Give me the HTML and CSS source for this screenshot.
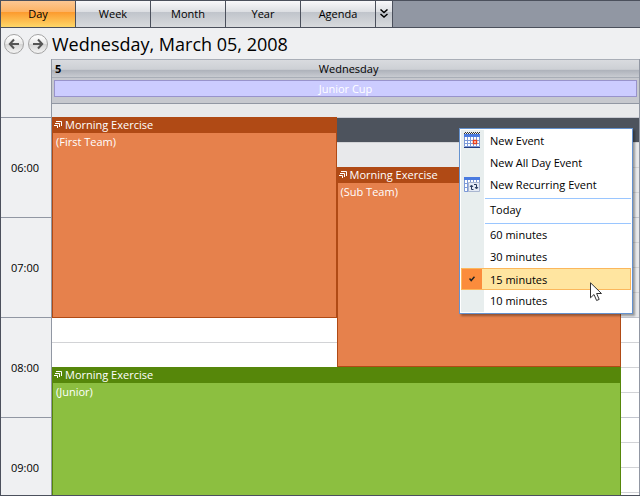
FILE: index.html
```html
<!DOCTYPE html>
<html lang="en">
<head>
  <meta charset="UTF-8" />
  <title>Calendar - Day View</title>
  <link rel="stylesheet" href="styles.css">
</head>
<body>
  <div class="calendar">
    <nav class="tabs">
      <button class="tab active">Day</button>
      <button class="tab">Week</button>
      <button class="tab">Month</button>
      <button class="tab">Year</button>
      <button class="tab">Agenda</button>
      <button class="tab more" aria-label="More views">
        <svg width="8" height="9" viewBox="0 0 8 9" fill="none" stroke="#000" stroke-width="1.5"><path d="M.5.5 4 3.5 7.5.5M.5 5 4 8 7.5 5" /></svg>
      </button>
    </nav>

    <header class="date-bar">
      <button class="nav-btn" aria-label="Previous day">
        <svg width="12" height="12" viewBox="0 0 12 12" fill="none" stroke="#555" stroke-width="2"><path d="M6 1.5 1.8 6 6 10.5M2 6h9" /></svg>
      </button>
      <button class="nav-btn" aria-label="Next day">
        <svg width="12" height="12" viewBox="0 0 12 12" fill="none" stroke="#555" stroke-width="2"><path d="M6 1.5 10.2 6 6 10.5M10 6H1" /></svg>
      </button>
      <h1>Wednesday, March 05, 2008</h1>
    </header>

    <div class="schedule">
      <div class="times">
        <div class="corner"></div>
        <div class="hour">06:00</div>
        <div class="hour">07:00</div>
        <div class="hour">08:00</div>
        <div class="hour">09:00</div>
      </div>

      <div class="day">
        <div class="day-head"><b>5</b><span>Wednesday</span></div>
        <div class="all-day"><div class="all-day-event">Junior Cup</div></div>
        <div class="before"></div>
        <div class="lane">
          <div class="slots">
            <div class="slot selected"></div>
            <div class="slot off"></div>
            <div class="slot off"></div>
            <div class="slot off hour-end"></div>
            <div class="slot off"></div>
            <div class="slot off"></div>
            <div class="slot off"></div>
            <div class="slot off hour-end"></div>
            <div class="slot"></div>
            <div class="slot"></div>
            <div class="slot"></div>
            <div class="slot hour-end"></div>
            <div class="slot"></div>
            <div class="slot"></div>
            <div class="slot"></div>
            <div class="slot hour-end"></div>
          </div>
          <div class="events">
            <article class="event first">
              <h2><svg width="8" height="8"><path d="M2 1.5h5.500V6M1 3.500h4.500V7M0 5.500h3.500V8" /></svg>Morning Exercise</h2>
              <p>(First Team)</p>
            </article>
            <article class="event sub">
              <h2><svg width="8" height="8"><path d="M2 1.5h5.500V6M1 3.500h4.500V7M0 5.500h3.500V8" /></svg>Morning Exercise</h2>
              <p>(Sub Team)</p>
            </article>
            <article class="event junior">
              <h2><svg width="8" height="8"><path d="M2 1.5h5.500V6M1 3.500h4.500V7M0 5.500h3.500V8" /></svg>Morning Exercise</h2>
              <p>(Junior)</p>
            </article>
          </div>
        </div>
      </div>
    </div>

    <div class="menu" role="menu">
      <button role="menuitem">
        <span class="icon">
          <svg width="16" height="16" viewBox="0 0 16 16">
            <path fill="#fff" d="M0 2h16v13H0z" />
            <path fill="#4a7be0" d="M0 2h16v3H0z" />
            <path stroke="#333" stroke-dasharray="1 1" d="M1 .5h15M0 1.5h16" />
            <path stroke="#7d9ad8" fill="none" d="M.5 5v9.5h15V5M3.5 5v9M6.5 5v9M9.5 5v9M12.5 5v9M1 8.5h14M1 11.5h14" />
            <path stroke="#223c80" d="M0 15.5h16" />
            <path fill="#fff" stroke="#e8401c" stroke-width="1.5" d="M9.5 8.500h3v3h-3z" />
          </svg>
        </span>
        <span>New Event</span>
      </button>
      <button role="menuitem"><span class="icon"></span><span>New All Day Event</span></button>
      <button role="menuitem">
        <span class="icon">
          <svg width="16" height="16" viewBox="0 0 16 16">
            <path fill="#fff" d="M0 1h16v14H0z" />
            <path fill="#4a7be0" d="M0 1h16v3H0z" />
            <path stroke="#7d9ad8" fill="none" d="M.5 4v11.5h4M15.500 4v3M3.500 4v11M6.500 4v3M9.500 4v3M12.500 4v3M1 7.500h3M1 11.500h3" />
            <path fill="#e4eaf5" stroke="#a9b6d0" d="M4.500 6.500h11v9h-11z" />
            <path stroke="#26385c" fill="none" d="M9.500 13.500h-2V10M6 11l1.500-2 1.500 2M10 8.500h2.500V12M11 11l1.500 2 1.500-2" />
          </svg>
        </span>
        <span>New Recurring Event</span>
      </button>
      <hr>
      <button role="menuitem"><span class="icon"></span><span>Today</span></button>
      <hr>
      <button role="menuitemradio" aria-checked="false"><span class="icon"></span><span>60 minutes</span></button>
      <button role="menuitemradio" aria-checked="false"><span class="icon"></span><span>30 minutes</span></button>
      <button class="checked" role="menuitemradio" aria-checked="true">
        <span class="icon">
          <svg width="6" height="6" viewBox="0 0 6 6" fill="none" stroke="#222" stroke-width="1.5"><path d="M.5 2.5 2.2 4.500 5.500.7" /></svg>
        </span>
        <span>15 minutes</span>
      </button>
      <button role="menuitemradio" aria-checked="false"><span class="icon"></span><span>10 minutes</span></button>
      <svg class="cursor" width="13" height="20" viewBox="0 0 13 20"><path d="M.5.8v15l3.500-3.300 2.600 6 2.600-1.100-2.600-5.900h4.900z" fill="#fff" stroke="#333" /></svg>
    </div>
  </div>
</body>
</html>
```

FILE: styles.css
```css
* {
  box-sizing: border-box;
}
body {
  margin: 0;
  font-family: "Open Sans", "Noto Sans", sans-serif;
  font-size: 11px;
  color: #000;
  background: #fff;
}
button {
  font: inherit;
  color: inherit;
  padding: 0;
  border: none;
  cursor: pointer;
}
.calendar {
  position: relative;
  display: flex;
  flex-direction: column;
  height: calc(100vh - 1px);
  border: 1px solid #4b505c;
  border-right: none;
  background: #eff0f2;
  overflow: hidden;
}

/* view tabs */
.tabs {
  display: flex;
  flex-shrink: 0;
  height: 27px;
  background: #9197a3;
  border-bottom: 1px solid #4b505c;
}
.tab {
  width: 75px;
  padding-bottom: 2px;
  border-right: 1px solid #4b505c;
  background: linear-gradient(#f8f8fa 0%, #dcdee2 42%, #c0c4cb 43%, #d8dadd 100%);
}
.tab.active {
  background: linear-gradient(#fcc793 0%, #fdb262 42%, #fc9a2e 43%, #fed768 100%);
}
.tab.more {
  width: 17px;
}

/* date navigation */
.date-bar {
  display: flex;
  flex-shrink: 0;
  align-items: center;
  gap: 4px;
  height: 31px;
  padding-left: 3px;
}
.nav-btn {
  display: flex;
  align-items: center;
  justify-content: center;
  width: 20px;
  height: 20px;
  border: 1px solid #a3a3a3;
  border-radius: 50%;
  background: linear-gradient(#fff, #e9e9e9 50%, #d5d5d5 51%, #f4f4f4);
}
h1 {
  margin: 0;
  font-size: 18px;
  font-weight: 400;
  white-space: nowrap;
}

/* schedule */
.schedule {
  display: flex;
  flex: 1;
  min-height: 0;
}
.times {
  width: 51px;
  flex-shrink: 0;
  padding-right: 1px;
  border-right: 1px solid #9197a3;
}
.corner {
  height: 58px;
}
.hour {
  display: flex;
  align-items: center;
  justify-content: center;
  height: 100px;
  margin-right: -1px;
  padding-right: 2px;
  border-top: 1px solid #9197a3;
}
.day {
  flex: 1;
  border-right: 1px solid #9197a3;
  background: #fff;
}
.day-head {
  display: flex;
  align-items: center;
  height: 19px;
  padding: 0 3px;
  border-top: 1px solid #a9aeb7;
  border-bottom: 1px solid #a9aeb7;
  background: linear-gradient(#d9dbdf 0%, #cdd0d5 55%, #aeb2bb 60%, #c8cbd1 100%);
}
.day-head span {
  flex: 1;
  text-align: center;
}
.all-day {
  height: 26px;
  padding: 2px;
  border-bottom: 1px solid #9197a3;
  background: #c6c8ce;
}
.all-day-event {
  height: 17px;
  line-height: 16px;
  border: 1px solid #9893cb;
  background: #ccccff;
  color: #fff;
  text-align: center;
}
.before {
  height: 14px;
  border-bottom: 1px solid #c8cad2;
  background: #e8e9eb;
}
.lane {
  display: grid;
}
.slots,
.events {
  grid-area: 1 / 1;
}
.slot {
  height: 25px;
  border-bottom: 1px solid #d2d3d6;
}
.slot.off {
  background: #e8e9eb;
}
.slot.hour-end {
  border-bottom-color: #c3c6cf;
}
.slot.selected {
  background: #4d535d;
}
.events {
  display: grid;
  grid-template-columns: 1fr 1fr;
  grid-template-rows: repeat(16, 25px);
  margin-top: -1px;
  padding-right: 18px;
}
.event {
  border: 1px solid #b04a15;
  border-top: none;
  background: #e6814c;
  color: #fff;
}
.event h2 {
  display: flex;
  align-items: center;
  gap: 3px;
  height: 16px;
  margin: 0;
  padding: 0 0 2px 1px;
  background: #b04a15;
  font-size: 11px;
  font-weight: 400;
}
.event h2 svg {
  fill: none;
  stroke: #fff;
}
.event p {
  margin: 0;
  padding: 1px 3px;
  line-height: 16px;
}
.event.first {
  grid-area: 1 / 1 / span 8 / 2;
  margin-bottom: -1px;
}
.event.sub {
  grid-area: 3 / 2 / span 8 / 3;
}
.event.junior {
  grid-area: 11 / 1 / span 6 / 3;
  border-color: #56870a;
  background: #8cbf40;
}
.event.junior h2 {
  background: #56870a;
}

/* context menu */
.menu {
  position: absolute;
  top: 127px;
  right: 7px;
  width: 174px;
  padding: 1px;
  border: 1px solid #6592cf;
  background: linear-gradient(90deg, #e8eeee 23px, #fff 23px) content-box, #fff;
  box-shadow: 2px 2px 2px rgba(0, 0, 0, 0.35);
}
.menu button {
  display: flex;
  align-items: center;
  gap: 8px;
  width: 100%;
  height: 22px;
  padding-bottom: 2px;
  background: none;
}
.icon {
  display: flex;
  align-items: center;
  justify-content: center;
  width: 21px;
  height: 20px;
}
.menu hr {
  height: 3px;
  margin: 0 0 0 24px;
  border: none;
  border-bottom: 1px solid #9ac6ff;
}
.menu .checked {
  padding: 0;
  border: 1px solid #fbb75c;
  background: #ffe5a0;
}
.checked .icon {
  width: 20px;
  background: #fb8c3c;
}
.cursor {
  position: absolute;
  left: 130px;
  top: 153px;
}
```
